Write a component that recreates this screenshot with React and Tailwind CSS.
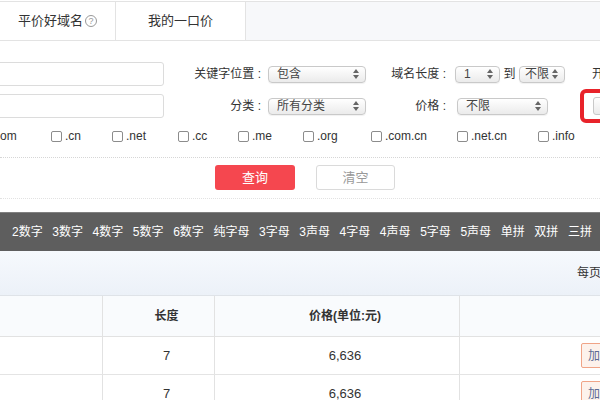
import React from 'react';

const font = "font-['Liberation_Sans','Noto_Sans_CJK_SC',sans-serif]";

function Arrows() {
  return (
    <svg width="6" height="10" viewBox="0 0 6 10" className="shrink-0">
      <polygon points="3,0 6,4 0,4" fill="#666" />
      <polygon points="0,6 6,6 3,10" fill="#666" />
    </svg>
  );
}

function Sel({ className, text }) {
  return (
    <div
      className={`${className} shrink-0 h-[17px] flex items-center justify-between pl-[8px] pr-[6px] rounded-[4px] border border-[#c9c9c9] bg-gradient-to-b from-white to-[#ebebeb] shadow-[0_1px_1px_rgba(0,0,0,0.06)] text-[12px] text-[#444] overflow-hidden whitespace-nowrap`}
    >
      <span className="overflow-hidden">{text}</span>
      <Arrows />
    </div>
  );
}

const exts = [
  { label: '.cn', w: 'w-[61px]' },
  { label: '.net', w: 'w-[66px]' },
  { label: '.cc', w: 'w-[60px]' },
  { label: '.me', w: 'w-[65px]' },
  { label: '.org', w: 'w-[68px]' },
  { label: '.com.cn', w: 'w-[86px]' },
  { label: '.net.cn', w: 'w-[81px]' },
  { label: '.info', w: 'w-[60px]' },
];

const tags = ['2数字', '3数字', '4数字', '5数字', '6数字', '纯字母', '3字母', '3声母', '4字母', '4声母', '5字母', '5声母', '单拼', '双拼', '三拼', '四拼'];

const rows = [
  { len: 7, price: '6,636' },
  { len: 7, price: '6,636' },
];

export default function App() {
  return (
    <div className={`w-[600px] h-[400px] overflow-hidden bg-white text-[#333] ${font}`}>
      {/* Tabs */}
      <div className="mt-px h-[40px] flex border-t border-b border-[#e3e3e3] bg-[#f7f8fa]">
        <div className="w-[116px] shrink-0 bg-white border-r border-[#e3e3e3] flex items-center justify-center text-[13px]">
          平价好域名
          <span className="ml-[2px] w-[12px] h-[12px] rounded-full border border-[#999] text-[#999] text-[9px] leading-[10px] flex items-center justify-center">?</span>
        </div>
        <div className="w-[130px] shrink-0 bg-white border-r border-[#e3e3e3] flex items-center justify-center text-[13px]">
          我的一口价
        </div>
        <div className="flex-1" />
      </div>

      {/* Filters */}
      <div className="pt-[21px]">
        <div className="h-[24px] flex items-center whitespace-nowrap">
          <div className="w-[168px] shrink-0 -ml-[4px] h-[24px] border border-[#dcdcdc] rounded-[3px]" />
          <div className="w-[101px] shrink-0 text-right text-[12px] pr-[4px]">关键字位置 :</div>
          <Sel className="ml-[3px] w-[98px]" text="包含" />
          <div className="w-[86px] shrink-0 text-right text-[12px] pr-[6px]">域名长度 :</div>
          <Sel className="ml-[3px] w-[45px]" text="1" />
          <div className="w-[19px] shrink-0 text-center text-[12px]">到</div>
          <Sel className="w-[46px] !pl-[5px]" text="不限" />
          <div className="ml-[27px] shrink-0 text-[12px]">开头 :</div>
        </div>
        <div className="mt-[8px] h-[24px] flex items-center whitespace-nowrap">
          <div className="w-[168px] shrink-0 -ml-[4px] h-[24px] border border-[#dcdcdc] rounded-[3px]" />
          <div className="w-[101px] shrink-0 text-right text-[12px] pr-[4px]">分类 :</div>
          <Sel className="ml-[3px] w-[98px]" text="所有分类" />
          <div className="w-[86px] shrink-0 text-right text-[12px] pr-[6px]">价格 :</div>
          <Sel className="ml-[5px] w-[91px]" text="不限" />
          <div className="ml-[32px] w-[60px] h-[34px] shrink-0 border-4 border-[#e8232a] rounded-[6px] flex items-center pl-[9px] bg-white">
            <div className="w-[40px] h-[18px] shrink-0 border border-[#c9c9c9] rounded-[3px] bg-gradient-to-b from-white to-[#ebebeb]" />
          </div>
        </div>
        <div className="mt-[8px] h-[20px] flex items-center text-[12px] whitespace-nowrap">
          <div className="w-[51px] shrink-0">om</div>
          {exts.map((e) => (
            <label key={e.label} className={`${e.w} shrink-0 flex items-center`}>
              <span className="w-[11px] h-[11px] shrink-0 border border-[#8c8c8c] rounded-[2px] bg-white mr-[3px]" />
              {e.label}
            </label>
          ))}
        </div>
      </div>

      {/* Buttons */}
      <div className="mt-[11px] border-t border-dotted border-[#d6d6d6] pt-[7px] pb-[8px] border-b-[#e2e2e2] border-b flex">
        <button className="ml-[215px] w-[80px] h-[25px] rounded-[3px] bg-[#f5474f] text-white text-[13px]">查询</button>
        <button className="ml-[21px] w-[79px] h-[25px] rounded-[3px] border border-[#dadada] bg-white text-[#999] text-[13px]">清空</button>
      </div>

      {/* Dark tag bar */}
      <div className="mt-[13px] h-[39px] border-t border-[#808080] bg-[#5e5e5e] flex items-center pl-[12px] gap-[9.6px] text-white text-[12px] whitespace-nowrap">
        {tags.map((t) => (
          <span key={t} className="shrink-0">{t}</span>
        ))}
      </div>

      {/* Pager bar */}
      <div className="h-[44px] bg-gradient-to-b from-[#f6f9fd] to-[#ecf1f8] flex items-center text-[12px] whitespace-nowrap">
        <span className="ml-[577px] shrink-0">每页显示</span>
      </div>

      {/* Table */}
      <div className="border-t border-[#dfe3e8]">
        <div className="h-[41px] flex bg-[#f9fbfd] border-b border-[#e2e2e2] font-bold text-[12px]">
          <div className="w-[103px] shrink-0 border-r border-[#e2e2e2]" />
          <div className="w-[112px] shrink-0 border-r border-[#e2e2e2] flex items-center justify-center pl-[16px]">长度</div>
          <div className="w-[245px] shrink-0 border-r border-[#e2e2e2] flex items-center justify-center pl-[16px]">价格(单位:元)</div>
          <div className="flex-1" />
        </div>
        {rows.map((r, i) => (
          <div key={i} className="h-[38px] flex border-b border-[#e4e4e4] text-[13px]">
            <div className="w-[103px] shrink-0 border-r border-[#e2e2e2]" />
            <div className="w-[112px] shrink-0 border-r border-[#e2e2e2] flex items-center justify-center pl-[16px]">{r.len}</div>
            <div className="w-[245px] shrink-0 border-r border-[#e2e2e2] flex items-center justify-center pl-[16px]">{r.price}</div>
            <div className="flex-1 min-w-0 flex items-center pl-[121px] whitespace-nowrap">
              <span className="h-[25px] shrink-0 px-[6px] flex items-center border border-[#f0a487] bg-[#fdf2ec] rounded-[2px] text-[#5b6a93] text-[12px]">加入购物车</span>
            </div>
          </div>
        ))}
      </div>
    </div>
  );
}
